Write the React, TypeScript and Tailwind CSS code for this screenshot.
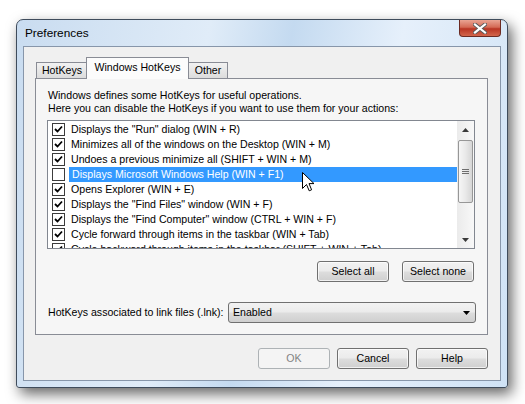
const rows = [
  { label: 'Displays the "Run" dialog (WIN + R)', on: true },
  { label: 'Minimizes all of the windows on the Desktop (WIN + M)', on: true },
  { label: 'Undoes a previous minimize all (SHIFT + WIN + M)', on: true },
  { label: 'Displays Microsoft Windows Help (WIN + F1)', on: false, selected: true },
  { label: 'Opens Explorer (WIN + E)', on: true },
  { label: 'Displays the "Find Files" window (WIN + F)', on: true },
  { label: 'Displays the "Find Computer" window (CTRL + WIN + F)', on: true },
  { label: 'Cycle forward through items in the taskbar (WIN + Tab)', on: true },
  { label: 'Cycle backward through items in the taskbar (SHIFT + WIN + Tab)', on: true },
]

function Button({ label, disabled }: { label: string; disabled?: boolean }) {
  return (
    <div
      className={
        disabled
          ? 'w-[72px] h-[21px] rounded-[3px] border border-[#adb2b5] bg-[#f4f4f4] text-[#838383] flex items-center justify-center'
          : 'w-[72px] h-[21px] rounded-[3px] border border-[#707070] bg-[linear-gradient(#f2f2f2_0%,#ebebeb_48%,#dddddd_52%,#cfcfcf_100%)] shadow-[inset_0_0_0_1px_rgba(255,255,255,0.7)] flex items-center justify-center'
      }
    >
      {label}
    </div>
  )
}

function Check({ on }: { on: boolean }) {
  return (
    <div className="w-[13px] h-[13px] border border-[#3c3c3c] bg-white flex items-center justify-center shrink-0">
      {on && (
        <svg width="9" height="9" viewBox="0 0 9 9">
          <path d="M1 4 L3.5 6.5 L8 1.5" fill="none" stroke="#000" strokeWidth="1.8" />
        </svg>
      )}
    </div>
  )
}

export default function App() {
  return (
    <div className="w-[525px] h-[404px] bg-white overflow-hidden pt-[19px] pl-[16px] font-['Liberation_Sans',Arial,sans-serif] text-[10.6px] leading-[13px] text-black">
      <div className="w-[492px] h-[369px] rounded-t-[7px] rounded-b-[3px] border border-[#3f4c5c] bg-[linear-gradient(100deg,#c9dcf0_0%,#e0ecf8_35%,#c4daf0_50%,#e6f0fb_70%,#cfe2f5_100%)] shadow-[4px_6px_14px_rgba(0,0,0,0.6)] flex flex-col">
        {/* title bar */}
        <div className="h-[26px] flex items-start justify-between">
          <span className="ml-[8px] mt-[6px] text-[11.8px] leading-[14px]">Preferences</span>
          <div className="mr-[6px] w-[42px] h-[17px] rounded-b-[4px] border border-[#6b2a22] border-t-0 bg-[linear-gradient(#eaa493_0%,#d46a55_45%,#b93523_55%,#d2664c_100%)] flex items-center justify-center">
            <svg width="14" height="11" viewBox="0 0 14 11">
              <path d="M2 1.5 L12 9.5 M12 1.5 L2 9.5" stroke="#5a5a5a" strokeWidth="4" strokeLinecap="square" />
              <path d="M2 1.5 L12 9.5 M12 1.5 L2 9.5" stroke="#ffffff" strokeWidth="2.2" strokeLinecap="square" />
            </svg>
          </div>
        </div>

        {/* client area */}
        <div className="mx-[6px] mb-[6px] flex-1 border border-[#8796aa] bg-[#f0f0f0] pl-[11px] pr-[12px] pt-[10px] flex flex-col">
          {/* tabs */}
          <div className="h-[21px] flex items-end">
            <div className="ml-px w-[52px] h-[16px] border border-b-0 border-[#898c95] bg-[linear-gradient(#f2f2f2,#dcdcdc)] flex items-center justify-center">
              HotKeys
            </div>
            <div className="-ml-[2px] w-[103px] h-[22px] -mb-px relative z-10 border border-b-0 border-[#898c95] bg-[#fcfcfc] flex items-start justify-center pt-[3px]">
              Windows HotKeys
            </div>
            <div className="-ml-px w-[40px] h-[16px] border border-b-0 border-[#898c95] bg-[linear-gradient(#f2f2f2,#dcdcdc)] flex items-center justify-center">
              Other
            </div>
          </div>

          {/* tab panel */}
          <div className="h-[257px] border border-[#898c95] bg-[#f6f6f6] px-[11px] pt-[10px] flex flex-col">
            <p className="pl-px">Windows defines some HotKeys for useful operations.</p>
            <p className="pl-px">Here you can disable the HotKeys if you want to use them for your actions:</p>

            {/* list */}
            <div className="relative mt-[5px] w-[428px] h-[129px] border border-[#828790] bg-white flex overflow-hidden">
              <div className="flex-1 pt-px">
                {rows.map((r, i) => (
                  <div key={i} className="h-[15px] flex items-center pl-[4px] whitespace-nowrap">
                    <Check on={r.on} />
                    <span
                      className={
                        r.selected
                          ? 'ml-[4px] flex-1 pl-[3px] h-[15px] leading-[15px] bg-[#3399ff] text-white'
                          : 'ml-[4px] flex-1 pl-[2px] h-[15px] leading-[15px]'
                      }
                    >
                      {r.label}
                    </span>
                  </div>
                ))}
              </div>
              {/* scrollbar */}
              <div className="w-[17px] bg-[linear-gradient(90deg,#ebebeb,#f8f8f8)] flex flex-col items-center">
                <div className="h-[17px] flex items-center justify-center">
                  <svg width="7" height="4" viewBox="0 0 7 4">
                    <path d="M3.5 0 L7 4 L0 4 Z" fill="#3a3a3a" />
                  </svg>
                </div>
                <div className="mt-[2px] w-[15px] h-[63px] rounded-[2px] border border-[#979797] bg-[linear-gradient(90deg,#f6f6f6_0%,#e9e9e9_50%,#d6d6d6_100%)] flex flex-col items-center justify-center gap-[1px]">
                  <div className="w-[7px] h-px bg-[#6e6e6e]" />
                  <div className="w-[7px] h-px bg-[#6e6e6e]" />
                  <div className="w-[7px] h-px bg-[#6e6e6e]" />
                </div>
                <div className="flex-1" />
                <div className="h-[17px] flex items-center justify-center">
                  <svg width="7" height="4" viewBox="0 0 7 4">
                    <path d="M0 0 L7 0 L3.5 4 Z" fill="#3a3a3a" />
                  </svg>
                </div>
              </div>
              {/* mouse pointer */}
              <svg className="absolute left-[254px] top-[51px]" width="13" height="20" viewBox="0 0 13 20">
                <path
                  d="M0.5 0.5 L0.5 16.5 L4.5 12.5 L7.2 18.8 L9.6 17.8 L7 11.6 L12 11.6 Z"
                  fill="#fff"
                  stroke="#000"
                  strokeWidth="1"
                  strokeLinejoin="round"
                />
              </svg>
            </div>

            {/* select buttons */}
            <div className="mt-[12px] w-[428px] pr-px flex justify-end gap-[13px]">
              <Button label="Select all" />
              <Button label="Select none" />
            </div>

            {/* combo row */}
            <div className="mt-[20px] w-[429px] flex items-center justify-between">
              <span className="pl-px">HotKeys associated to link files (.lnk):</span>
              <div className="w-[248px] h-[21px] rounded-[3px] border border-[#707070] bg-[linear-gradient(#f2f2f2_0%,#ebebeb_48%,#dddddd_52%,#cfcfcf_100%)] flex items-center justify-between pl-[4px] pr-[5px]">
                <span>Enabled</span>
                <svg width="7" height="4" viewBox="0 0 7 4">
                  <path d="M0 0 L7 0 L3.5 4 Z" fill="#000" />
                </svg>
              </div>
            </div>
          </div>

          {/* dialog buttons */}
          <div className="mt-[13px] flex justify-end gap-[7px]">
            <Button label="OK" disabled />
            <Button label="Cancel" />
            <Button label="Help" />
          </div>
        </div>
      </div>
    </div>
  )
}
